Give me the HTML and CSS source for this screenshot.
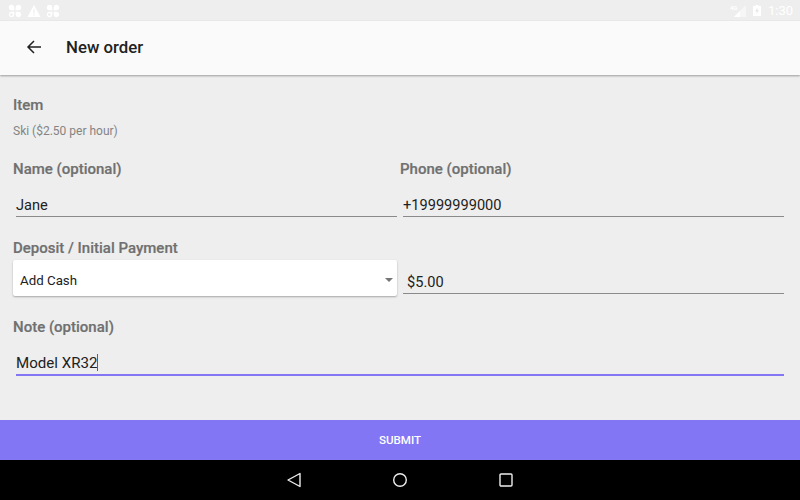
FILE: index.html

```html
<!DOCTYPE html>
<html lang="en">
<head>
    <meta charset="UTF-8">
    <title>New order</title>
    <link rel="stylesheet" href="styles.css">
</head>
<body>
    <div class="status-bar">
        <div class="status-left">
            <svg width="14" height="14" viewBox="0 0 14 14" fill="#fff"><path d="M3.4.8C5.2.8 6.3 2 6.3 3.6v2.7H3.6C2 6.3.8 5.2.8 3.4.8 1.9 1.9.8 3.4.8zM10.6.8C12.1.8 13.2 1.9 13.2 3.4c0 1.8-1.2 2.9-2.8 2.9H7.7V3.6C7.7 2 8.8.8 10.6.8zM3.6 7.7h2.7v2.7c0 1.6-1.1 2.8-2.9 2.8C1.9 13.2.8 12.1.8 10.6c0-1.8 1.2-2.9 2.8-2.9zM7.7 7.7h2.7c1.6 0 2.8 1.1 2.8 2.9 0 1.5-1.1 2.6-2.6 2.6-1.8 0-2.9-1.2-2.9-2.8z"/><circle cx="3.4" cy="10.6" r="1.3" fill="#eee"/></svg>
            <svg width="14" height="14" viewBox="0 0 14 14" fill="#fff"><path d="M7 1L13.5 13H.5z"/><rect x="6.4" y="5" width="1.2" height="4.5" fill="#eee"/><rect x="6.4" y="10.3" width="1.2" height="1.3" fill="#eee"/></svg>
            <svg width="14" height="14" viewBox="0 0 14 14" fill="#fff"><path d="M3.4.8C5.2.8 6.3 2 6.3 3.6v2.7H3.6C2 6.3.8 5.2.8 3.4.8 1.9 1.9.8 3.4.8zM10.6.8C12.1.8 13.2 1.9 13.2 3.4c0 1.8-1.2 2.9-2.8 2.9H7.7V3.6C7.7 2 8.8.8 10.6.8zM3.6 7.7h2.7v2.7c0 1.6-1.1 2.8-2.9 2.8C1.9 13.2.8 12.1.8 10.6c0-1.8 1.2-2.9 2.8-2.9zM7.7 7.7h2.7c1.6 0 2.8 1.1 2.8 2.9 0 1.5-1.1 2.6-2.6 2.6-1.8 0-2.9-1.2-2.9-2.8z"/><circle cx="3.4" cy="10.6" r="1.3" fill="#eee"/></svg>
        </div>
        <div class="status-right">
            <div class="signal">
                <svg width="13" height="12" viewBox="0 0 13 12"><path d="M13 0V12H1z" fill="#f6f6f6"/><path d="M7 6L1 12H7z" fill="#fff"/></svg>
                <span class="net-type">4G</span>
            </div>
            <svg width="8" height="11" viewBox="0 0 8 11"><path d="M2.5 0h3v1H8v10H0V1h2.5z" fill="#fff"/><path d="M4.5 2.5L2.3 6.3h1.5L3.4 9 5.8 5.2H4.3z" fill="#e4e4e4"/></svg>
            <span class="clock">1:30</span>
        </div>
    </div>

    <header class="toolbar">
        <svg class="back" width="16" height="16" viewBox="0 0 16 16" fill="none" stroke="#212121" stroke-width="1.5"><path d="M15 8H2M8 2L2 8l6 6"/></svg>
        <h1>New order</h1>
    </header>

    <main class="form">
        <p class="label">Item</p>
        <p class="item-value">Ski ($2.50 per hour)</p>

        <div class="row row-contact">
            <div class="col">
                <p class="label">Name (optional)</p>
                <div class="field field-left">Jane</div>
            </div>
            <div class="col">
                <p class="label phone-label">Phone (optional)</p>
                <div class="field">+19999999000</div>
            </div>
        </div>

        <div class="row row-payment">
            <div class="col">
                <p class="label">Deposit / Initial Payment</p>
                <div class="select">
                    <span>Add Cash</span>
                    <span class="caret"></span>
                </div>
            </div>
            <div class="col col-end">
                <div class="field field-amount">$5.00</div>
            </div>
        </div>

        <div class="note">
            <p class="label">Note (optional)</p>
            <div class="field field-left focused">Model XR32<span class="cursor"></span></div>
        </div>
    </main>

    <button class="submit">SUBMIT</button>

    <nav class="nav-bar">
        <svg width="16" height="16" viewBox="0 0 16 16" fill="none" stroke="#eee" stroke-width="1.4"><path d="M14 1.5V14.5L2 8z" stroke-linejoin="round"/></svg>
        <svg width="16" height="16" viewBox="0 0 16 16" fill="none" stroke="#eee" stroke-width="1.4"><circle cx="8" cy="8" r="6.3"/></svg>
        <svg width="16" height="16" viewBox="0 0 16 16" fill="none" stroke="#eee" stroke-width="1.4"><rect x="2" y="2" width="12" height="12" rx="1"/></svg>
    </nav>
</body>
</html>
```

FILE: styles.css

```css
* {
    margin: 0;
    padding: 0;
    box-sizing: border-box;
}

body {
    width: 800px;
    height: 500px;
    overflow: hidden;
    display: flex;
    flex-direction: column;
    background: #eeeeee;
    font-family: Roboto, sans-serif;
}

.status-bar {
    height: 21px;
    flex: none;
    display: flex;
    align-items: center;
    justify-content: space-between;
    padding: 0 7px 0 8px;
    background: #eeeeee;
}

.status-left {
    display: flex;
    gap: 5px;
}

.status-right {
    display: flex;
    align-items: center;
    gap: 7px;
}

.signal {
    position: relative;
    width: 13px;
    height: 12px;
}

.signal svg {
    display: block;
}

.net-type {
    position: absolute;
    top: -1px;
    left: -3px;
    color: #fff;
    font-size: 6px;
    font-weight: 700;
}

.clock {
    color: #fff;
    font-size: 13px;
}

.toolbar {
    height: 54px;
    flex: none;
    display: flex;
    align-items: center;
    padding: 0 0 2px 26px;
    background: #fafafa;
    box-shadow: 0 1px 2px rgba(0,0,0,0.35);
}

.toolbar h1 {
    margin-left: 24px;
    font-size: 16.8px;
    font-weight: 500;
    color: #212121;
}

.form {
    flex: 1;
    padding: 22px 16px 0 13px;
}

.label {
    font-size: 15px;
    line-height: 16px;
    font-weight: 500;
    color: #707070;
    -webkit-text-stroke: 0.2px #707070;
}

.item-value {
    margin-top: 12px;
    font-size: 12px;
    line-height: 13px;
    color: #848484;
}

.row {
    display: grid;
    grid-template-columns: 384px 381px;
    gap: 6px;
}

.row-contact {
    margin-top: 23px;
}

.row-payment {
    margin-top: 23px;
}

.col-end {
    display: flex;
    align-items: flex-end;
}

.phone-label {
    margin-left: -3px;
}

.field {
    margin-top: 17px;
    height: 23px;
    font-size: 14.6px;
    line-height: 23px;
    color: #212121;
    border-bottom: 1px solid #8a8a8a;
}

.field-left {
    margin-left: 3px;
}

.field-amount {
    width: 100%;
    margin-top: 0;
    margin-bottom: 2px;
    padding-left: 4px;
}

.select {
    margin-top: 4px;
    height: 36px;
    display: flex;
    align-items: center;
    justify-content: space-between;
    padding: 4px 4px 0 7px;
    background: #fff;
    border-radius: 2px;
    box-shadow: 0 1px 2px rgba(0,0,0,0.3);
    font-size: 13.3px;
    color: #212121;
}

.caret {
    width: 0;
    height: 0;
    border-left: 4px solid transparent;
    border-right: 4px solid transparent;
    border-top: 4px solid #757575;
}

.note {
    margin-top: 23px;
}

.focused {
    margin-top: 16px;
    border-bottom: 2px solid #8276f5;
    height: 25px;
    font-size: 15.1px;
    line-height: 24px;
}

.cursor {
    display: inline-block;
    width: 1px;
    height: 17px;
    vertical-align: -3px;
    background: #5c52c4;
}

.submit {
    height: 40px;
    flex: none;
    border: 0;
    background: #8276f5;
    color: #fff;
    font-family: Roboto, sans-serif;
    font-size: 11.6px;
    font-weight: 500;
}

.nav-bar {
    height: 40px;
    flex: none;
    display: flex;
    align-items: center;
    justify-content: center;
    gap: 90px;
    background: #000;
}
```
